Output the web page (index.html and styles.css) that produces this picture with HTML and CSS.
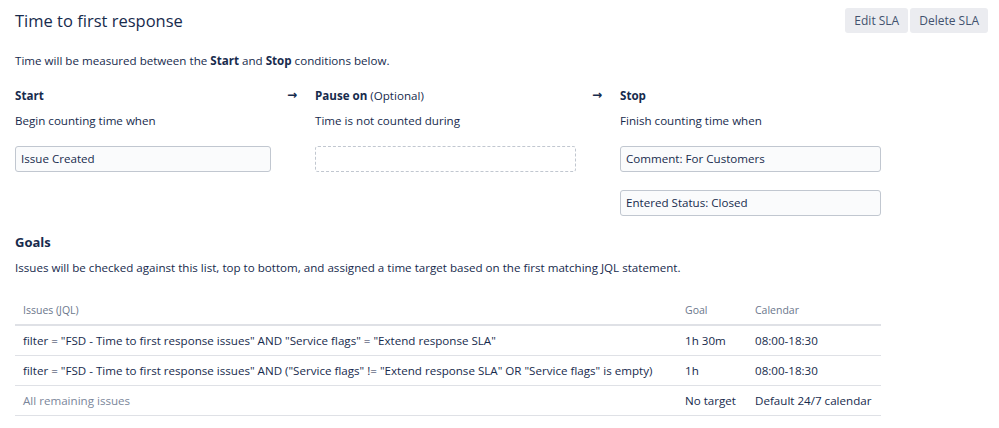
FILE: index.html
```html
<!DOCTYPE html>
<html>
<head>
<meta charset="utf-8">
<link rel="stylesheet" href="styles.css">
</head>
<body>
<div class="page">
  <header class="top">
    <h1 class="title">Time to first response</h1>
    <div class="actions">
      <button class="btn">Edit SLA</button>
      <button class="btn">Delete SLA</button>
    </div>
  </header>
  <p class="intro">Time will be measured between the <b>Start</b> and <b>Stop</b> conditions below.</p>

  <div class="conds">
    <div class="cond">
      <div class="cond-head"><b>Start</b></div>
      <div class="cond-sub">Begin counting time when</div>
      <div class="box">Issue Created</div>
    </div>
    <div class="arrow">→</div>
    <div class="cond">
      <div class="cond-head"><b>Pause on</b> (Optional)</div>
      <div class="cond-sub">Time is not counted during</div>
      <div class="box empty"></div>
    </div>
    <div class="arrow">→</div>
    <div class="cond">
      <div class="cond-head"><b>Stop</b></div>
      <div class="cond-sub">Finish counting time when</div>
      <div class="box">Comment: For Customers</div>
      <div class="box">Entered Status: Closed</div>
    </div>
  </div>

  <h2 class="goals">Goals</h2>
  <p class="goals-desc">Issues will be checked against this list, top to bottom, and assigned a time target based on the first matching JQL statement.</p>

  <table class="gt">
    <thead>
      <tr><th class="c-jql">Issues (JQL)</th><th class="c-goal">Goal</th><th class="c-cal">Calendar</th></tr>
    </thead>
    <tbody>
      <tr><td>filter = "FSD - Time to first response issues" AND "Service flags" = "Extend response SLA"</td><td>1h 30m</td><td>08:00-18:30</td></tr>
      <tr><td>filter = "FSD - Time to first response issues" AND ("Service flags" != "Extend response SLA" OR "Service flags" is empty)</td><td>1h</td><td>08:00-18:30</td></tr>
      <tr><td class="muted">All remaining issues</td><td>No target</td><td>Default 24/7 calendar</td></tr>
    </tbody>
  </table>
</div>
</body>
</html>
```
FILE: styles.css
```css
* { box-sizing: border-box; }
html, body { margin: 0; padding: 0; background: #fff; }
body {
  font-family: "Open Sans", "Noto Sans", sans-serif;
  font-size: 11.6px;
  color: #172b4d;
}
.page { padding: 8px 11px 0 15px; }
.top { display: flex; justify-content: space-between; align-items: flex-start; }
.title {
  margin: 0;
  font-size: 16.5px;
  font-weight: 400;
  line-height: 25px;
  color: #172b4d;
}
.actions { display: flex; gap: 2px; }
.btn {
  font: inherit;
  font-size: 12px;
  color: #42526e;
  background: #ebecf0;
  border: 0;
  border-radius: 3px;
  height: 25px;
  padding: 0 9px;
}
.intro { margin: 18px 0 0; line-height: 20px; }
b { font-weight: 700; color: #172b4d; }
.conds { display: flex; margin-top: 16px; }
.cond { display: flex; flex-direction: column; }
.cond:nth-child(1) { width: 256px; }
.cond:nth-child(3), .cond:nth-child(5) { width: 261px; }
.arrow {
  width: 44px;
  padding-left: 16px;
  font-family: "DejaVu Sans", sans-serif;
  font-weight: 700;
  font-size: 12px;
  line-height: 16px;
  color: #172b4d;
}
.cond-head { line-height: 18px; }
.cond-sub { margin-top: 7px; line-height: 18px; }
.box {
  margin-top: 16px;
  height: 26px;
  border: 1px solid #c1c7d0;
  border-radius: 3px;
  background: #fafbfc;
  padding: 0 5px;
  line-height: 24px;
}
.box + .box { margin-top: 18px; }
.box.empty { border: 1px dashed #c1c7d0; background: #fff; }
.goals {
  margin: 16px 0 0;
  font-size: 13px;
  font-weight: 700;
  line-height: 20px;
}
.goals-desc { margin: 6px 0 0; line-height: 20px; }
.gt {
  margin-top: 17px;
  width: 866px;
  border-collapse: collapse;
}
.gt th {
  font-weight: 400;
  font-size: 10.5px;
  color: #6b778c;
  text-align: left;
  padding: 0 8px;
  height: 30px;
  border-bottom: 2px solid #dfe1e6;
}
.gt td {
  padding: 0 8px;
  height: 30px;
  border-bottom: 1px solid #dfe1e6;
}
.c-goal { width: 70px; }
.c-cal { width: 134px; }
.muted { color: #7a869a; }
```
